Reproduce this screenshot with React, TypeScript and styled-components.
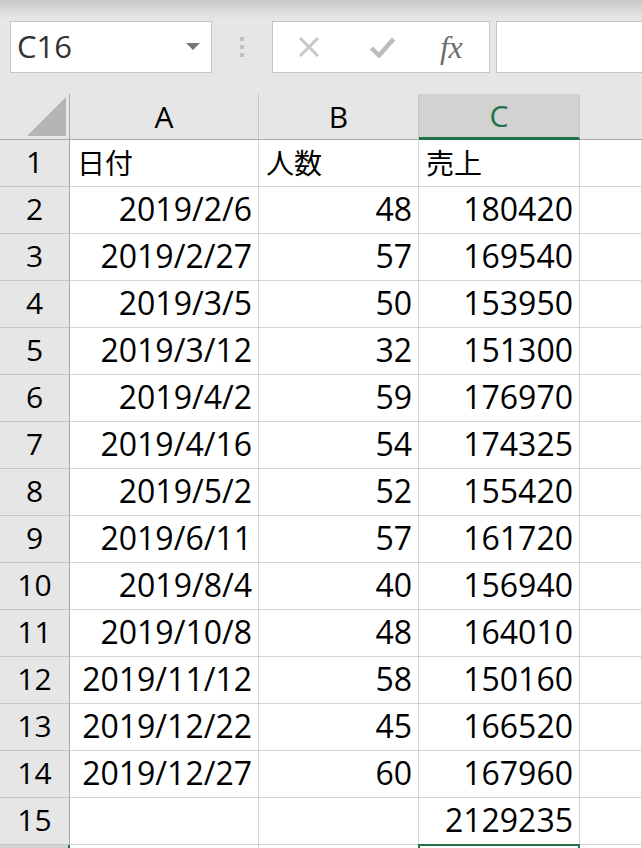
import React from "react";
import styled, { createGlobalStyle } from "styled-components";

const Global = createGlobalStyle`
  html, body { margin: 0; padding: 0; background: #e6e6e6; overflow: hidden; }
  body { font-family: "Open Sans", "Noto Sans CJK JP", sans-serif; }
  * { box-sizing: border-box; }
`;

const Page = styled.div`
  width: 642px;
  height: 848px;
  overflow: hidden;
  background: #e6e6e6;
  display: flex;
  flex-direction: column;
`;

const Toolbar = styled.div`
  display: flex;
  align-items: flex-start;
  flex-shrink: 0;
  height: 94px;
  padding: 21px 0 0 10px;
  background: linear-gradient(#c8c8c8 0px, #e3e3e3 16px, #e6e6e6 22px);
`;

const Box = styled.div`
  height: 52px;
  background: #fff;
  border: 1px solid #c6c6c6;
  display: flex;
  align-items: center;
  flex-shrink: 0;
`;

const NameBox = styled(Box)`
  width: 202px;
  padding: 0 11px 2px 6px;
  justify-content: space-between;
  font-size: 31px;
  color: #333;
`;

const Arrow = styled.div`
  width: 0;
  height: 0;
  border-left: 7px solid transparent;
  border-right: 7px solid transparent;
  border-top: 7px solid #767676;
`;

const Dots = styled.div`
  display: flex;
  flex-direction: column;
  gap: 4px;
  margin: 16px 28px 0;
  span {
    display: block;
    width: 4px;
    height: 4px;
    background: #c0c0c0;
  }
`;

const FormulaButtons = styled(Box)`
  width: 218px;
  padding: 0 0 0 25px;
`;

const IconSlot = styled.div<{ $w: number }>`
  width: ${(p) => p.$w}px;
  display: flex;
  align-items: center;
  justify-content: flex-start;
`;

const Fx = styled.span`
  font-family: "Liberation Serif", serif;
  font-style: italic;
  font-size: 32px;
  color: #6e6e6e;
  line-height: 1;
  letter-spacing: -0.5px;
`;

const FormulaInput = styled(Box)`
  width: 300px;
  margin-left: 6px;
`;

const Grid = styled.div`
  display: grid;
  flex-shrink: 0;
  grid-template-columns: 70px 189px 160px 161px 62px;
  grid-template-rows: 46px repeat(16, 47px);
`;

const Corner = styled.div`
  position: relative;
  border-right: 1px solid #a9a9a9;
  border-bottom: 1px solid #ababab;
  background: #e6e6e6;
  &::after {
    content: "";
    position: absolute;
    right: 3px;
    bottom: 3px;
    width: 0;
    height: 0;
    border-left: 39px solid transparent;
    border-bottom: 39px solid #b5b5b5;
  }
`;

const ColHeader = styled.div<{ $sel?: boolean }>`
  display: flex;
  align-items: center;
  justify-content: center;
  font-size: 30px;
  background: ${(p) => (p.$sel ? "#d2d2d2" : "#e6e6e6")};
  color: ${(p) => (p.$sel ? "#217346" : "#000")};
  border-right: 1px solid #c6c6c6;
  border-bottom: ${(p) => (p.$sel ? "3px solid #217346" : "1px solid #ababab")};
  padding-top: ${(p) => (p.$sel ? "1px" : "0")};
  padding-bottom: 1px;
`;

const ColHeaderBlank = styled.div`
  background: #e6e6e6;
  border-bottom: 1px solid #ababab;
`;

const RowHeader = styled.div<{ $sel?: boolean }>`
  display: flex;
  align-items: center;
  justify-content: center;
  font-size: 30px;
  padding-bottom: 3px;
  background: ${(p) => (p.$sel ? "#d2d2d2" : "#e6e6e6")};
  color: #000;
  border-right: ${(p) => (p.$sel ? "2px solid #217346" : "1px solid #a9a9a9")};
  border-bottom: 1px solid #c6c6c6;
`;

const Cell = styled.div<{ $align?: "left" | "right"; $sel?: boolean }>`
  display: flex;
  align-items: center;
  justify-content: ${(p) => (p.$align === "left" ? "flex-start" : "flex-end")};
  padding: ${(p) => (p.$align === "left" ? "0 0 3px 7px" : "0 6px 3px 0")};
  font-size: 32px;
  color: #000;
  background: #fff;
  border-right: 1px solid #d4d4d4;
  border-bottom: 1px solid #d4d4d4;
  white-space: nowrap;
  ${(p) =>
    p.$sel
      ? `box-shadow: inset 0 0 0 2px #217346; margin: -1px -1px 0 -1px;`
      : ""}
`;

const Jp = styled.span`
  font-family: "Noto Sans CJK JP", sans-serif;
  font-size: 28px;
`;

const rows: [string, string, string][] = [
  ["2019/2/6", "48", "180420"],
  ["2019/2/27", "57", "169540"],
  ["2019/3/5", "50", "153950"],
  ["2019/3/12", "32", "151300"],
  ["2019/4/2", "59", "176970"],
  ["2019/4/16", "54", "174325"],
  ["2019/5/2", "52", "155420"],
  ["2019/6/11", "57", "161720"],
  ["2019/8/4", "40", "156940"],
  ["2019/10/8", "48", "164010"],
  ["2019/11/12", "58", "150160"],
  ["2019/12/22", "45", "166520"],
  ["2019/12/27", "60", "167960"],
];

export default function App() {
  return (
    <Page>
      <Global />
      <Toolbar>
        <NameBox>
          <span>C16</span>
          <Arrow />
        </NameBox>
        <Dots>
          <span />
          <span />
          <span />
        </Dots>
        <FormulaButtons>
          <IconSlot $w={72}>
            <svg width="22" height="20" viewBox="0 0 22 20">
              <path d="M2 1 L20 19 M20 1 L2 19" stroke="#c8c8c8" strokeWidth="3" fill="none" />
            </svg>
          </IconSlot>
          <IconSlot $w={70}>
            <svg width="25" height="21" viewBox="0 0 25 21">
              <path d="M1.5 11 L9 18.5 L23.5 2" stroke="#bdbdbd" strokeWidth="4.5" fill="none" strokeLinejoin="miter" />
            </svg>
          </IconSlot>
          <Fx>fx</Fx>
        </FormulaButtons>
        <FormulaInput />
      </Toolbar>
      <Grid>
        <Corner />
        <ColHeader>A</ColHeader>
        <ColHeader>B</ColHeader>
        <ColHeader $sel>C</ColHeader>
        <ColHeaderBlank />

        <RowHeader>1</RowHeader>
        <Cell $align="left"><Jp>日付</Jp></Cell>
        <Cell $align="left"><Jp>人数</Jp></Cell>
        <Cell $align="left"><Jp>売上</Jp></Cell>
        <Cell />

        {rows.map((r, i) => (
          <React.Fragment key={i}>
            <RowHeader>{i + 2}</RowHeader>
            <Cell>{r[0]}</Cell>
            <Cell>{r[1]}</Cell>
            <Cell>{r[2]}</Cell>
            <Cell />
          </React.Fragment>
        ))}

        <RowHeader>15</RowHeader>
        <Cell />
        <Cell />
        <Cell>2129235</Cell>
        <Cell />

        <RowHeader $sel />
        <Cell />
        <Cell />
        <Cell $sel />
        <Cell />
      </Grid>
    </Page>
  );
}
